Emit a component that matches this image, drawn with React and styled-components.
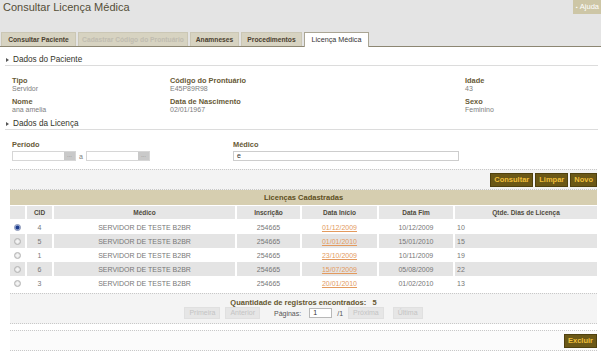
import styled, { createGlobalStyle } from 'styled-components';

const GlobalStyle = createGlobalStyle`
	body {
		margin: 0;
		background: #fff;
		font-family: "Liberation Sans", Arial, sans-serif;
	}
`;

const Page = styled.div`
	width: 601px;
	height: 352px;
	overflow: hidden;
	background: #fff;
`;

const Header = styled.div`
	background: #e4e4e4;
	display: flex;
	flex-direction: column;
`;

const TitleRow = styled.div`
	height: 32px;
	display: flex;
	justify-content: space-between;
	align-items: flex-start;
`;

const Title = styled.h1`
	margin: 0;
	padding: 1px 0 0 3px;
	font-size: 11px;
	line-height: 13px;
	font-weight: normal;
	color: #544e38;
`;

const HelpButton = styled.div`
	height: 14px;
	line-height: 14px;
	padding: 0 2px 0 3px;
	background: #cdc6a6;
	color: #fff;
	font-size: 7.5px;
	white-space: nowrap;
	span {
		font-size: 5px;
		margin-right: 2px;
	}
`;

const TabBar = styled.div`
	height: 14px;
	display: flex;
	align-items: flex-end;
	gap: 2px;
	padding-left: 1px;
	border-bottom: 1px solid #8c8672;
`;

const Tab = styled.div`
	width: ${props => props.$w}px;
	height: ${props => (props.$active ? '15px' : '14px')};
	margin-bottom: ${props => (props.$active ? '-1px' : '0')};
	box-sizing: border-box;
	background: ${props => (props.$active ? '#fff' : '#d7d3c1')};
	border: 1px solid ${props => (props.$active ? '#aaa594' : '#cbc7b5')};
	border-bottom: none;
	text-align: center;
	font-size: ${props => (props.$active ? '7.2px' : '6.7px')};
	font-weight: ${props => (props.$active ? 'normal' : 'bold')};
	line-height: 13px;
	white-space: nowrap;
	color: ${props =>
		props.$disabled ? '#c0bcb0' : props.$active ? '#333' : '#4a4030'};
`;

const Content = styled.div`
	padding: 0 3px 0 5px;
`;

const SectionTitle = styled.div`
	margin-top: ${props => props.$mt}px;
	height: 11px;
	display: flex;
	align-items: center;
	font-size: 8.2px;
	color: #34342a;
	border-bottom: 1px solid #dcdcdc;
	&::before {
		content: '';
		margin: 0 4px 0 1px;
		border-left: 3px solid #555;
		border-top: 2.5px solid transparent;
		border-bottom: 2.5px solid transparent;
	}
`;

const InfoGrid = styled.div`
	display: grid;
	grid-template-columns: 158px 295px 1fr;
	row-gap: 5px;
	padding-left: 7px;
	margin-top: 11px;
`;

const Label = styled.div`
	font-size: 7.4px;
	line-height: 8px;
	font-weight: bold;
	color: #675a36;
	white-space: nowrap;
`;

const Value = styled.div`
	font-size: 7px;
	line-height: 8px;
	color: #7e7e7e;
`;

const FormRow = styled.div`
	display: flex;
	padding-left: 7px;
	margin-top: 11px;
`;

const FormField = styled.div`
	width: ${props => props.$w}px;
`;

const InputLine = styled.div`
	margin-top: 2px;
	display: flex;
	align-items: center;
`;

const DateInput = styled.div`
	width: 64px;
	height: 10px;
	box-sizing: border-box;
	border: 1px solid #d6d6d6;
	display: flex;
	justify-content: flex-end;
	background: #fff;
`;

const CalendarButton = styled.div`
	width: 11px;
	height: 100%;
	background: #c9c9c9;
	color: #8a8a8a;
	font-size: 6px;
	line-height: 6px;
	text-align: center;
	overflow: hidden;
`;

const Separator = styled.span`
	font-size: 7px;
	color: #7e7e7e;
	margin: 0 3px 0 3px;
`;

const TextInput = styled.div`
	width: ${props => props.$w}px;
	height: 10px;
	box-sizing: border-box;
	border: 1px solid #cdcdcd;
	padding-left: 3px;
	font-size: 7px;
	line-height: 8px;
	color: #333;
	background: #fff;
`;

const TableArea = styled.div`
	margin: 8px 1px 0 5px;
`;

const Toolbar = styled.div`
	height: 19px;
	display: flex;
	justify-content: flex-end;
	align-items: center;
	gap: 2px;
	background: ${props => props.$bg || '#f3f3f3'};
	border-top: 1px dotted #c8c8c8;
	border-bottom: 1px dotted #c8c8c8;
	margin-top: ${props => props.$mt || 0}px;
`;

const ActionButton = styled.button`
	height: 14px;
	padding: 0 3px;
	margin: 0;
	background: #6b5817;
	border: 1px solid #4f410f;
	color: #efbf3a;
	font-family: inherit;
	font-size: 7.5px;
	font-weight: bold;
	line-height: 12px;
`;

const Caption = styled.div`
	height: 15px;
	line-height: 15px;
	background: #d6ceb0;
	color: #5e4e22;
	font-size: 7.5px;
	font-weight: bold;
	text-align: center;
`;

const Row = styled.div`
	display: grid;
	grid-template-columns: 15px 25px 181px 63px 75px 74px 1fr;
	column-gap: 2px;
	height: ${props => (props.$head ? 13 : 14)}px;
	margin-top: ${props => (props.$head ? 1 : 0)}px;
	margin-bottom: ${props => (props.$head ? 1 : 0)}px;
`;

const Cell = styled.div`
	display: flex;
	align-items: center;
	justify-content: ${props => (props.$left ? 'flex-start' : 'center')};
	padding-left: ${props => (props.$left ? 2 : 0)}px;
	background: ${props => (props.$shade ? '#e4e4e4' : 'transparent')};
	font-size: 7px;
	color: #777;
	white-space: nowrap;
`;

const HeadCell = styled(Cell)`
	background: #e6e6e6;
	font-size: 6.5px;
	font-weight: bold;
	color: #4f4a3c;
`;

const DateLink = styled.a`
	color: #e39a5e;
	text-decoration: underline;
`;

const Radio = styled.span`
	width: 7px;
	height: 7px;
	box-sizing: border-box;
	border-radius: 50%;
	border: 1px solid ${props => (props.$checked ? '#7d8bb0' : '#b4b4b4')};
	background: ${props =>
		props.$checked
			? 'radial-gradient(circle, #1d3c8c 0 1.5px, #8ea3d2 2.2px, #e6ecf8 3px)'
			: 'radial-gradient(circle, #f4f4f4 0 1px, #d4d4d4 3px)'};
`;

const Pager = styled.div`
	margin-top: 3px;
	padding: 4px 0;
	background: #f4f4f4;
	border-top: 1px dotted #c8c8c8;
	border-bottom: 1px dotted #c8c8c8;
`;

const Count = styled.div`
	height: 9px;
	line-height: 9px;
	text-align: center;
	font-size: 7.5px;
	font-weight: bold;
	color: #655730;
	white-space: pre;
`;

const PagerLine = styled.div`
	height: 12px;
	display: flex;
	justify-content: center;
	align-items: center;
	gap: 5px;
	font-size: 7px;
	color: #555;
`;

const PagerButton = styled.button`
	height: 12px;
	padding: 0 4px;
	margin: 0 ${props => props.$mr || 0}px 0 0;
	background: #e6e6e6;
	border: 1px solid #e0e0e0;
	color: #c4c4c4;
	font-family: inherit;
	font-size: 7px;
	line-height: 10px;
`;

const PageInput = styled.div`
	width: 23px;
	height: 10px;
	box-sizing: border-box;
	margin-left: 3px;
	border: 1px solid #b8b8b8;
	background: #fff;
	padding-left: 3px;
	font-size: 7px;
	line-height: 8px;
	color: #333;
`;

const licencas = [
	{ cid: 4, inicio: '01/12/2009', fim: '10/12/2009', dias: 10, checked: true },
	{ cid: 5, inicio: '01/01/2010', fim: '15/01/2010', dias: 15 },
	{ cid: 1, inicio: '23/10/2009', fim: '10/11/2009', dias: 19 },
	{ cid: 6, inicio: '15/07/2009', fim: '05/08/2009', dias: 22 },
	{ cid: 3, inicio: '20/01/2010', fim: '01/02/2010', dias: 13 }
];

const tabs = [
	{ name: 'Consultar Paciente', w: 75 },
	{ name: 'Cadastrar Código do Prontuário', w: 110, disabled: true },
	{ name: 'Anamneses', w: 49 },
	{ name: 'Procedimentos', w: 61 },
	{ name: 'Licença Médica', w: 65, active: true }
];

function App() {
	return (
		<Page>
			<GlobalStyle />
			<Header>
				<TitleRow>
					<Title>Consultar Licença Médica</Title>
					<HelpButton>
						<span>▪</span>Ajuda
					</HelpButton>
				</TitleRow>
				<TabBar>
					{tabs.map(tab => (
						<Tab
							key={tab.name}
							$w={tab.w}
							$active={tab.active}
							$disabled={tab.disabled}
						>
							{tab.name}
						</Tab>
					))}
				</TabBar>
			</Header>
			<Content>
				<SectionTitle $mt={7}>Dados do Paciente</SectionTitle>
				<InfoGrid>
					<div>
						<Label>Tipo</Label>
						<Value>Servidor</Value>
					</div>
					<div>
						<Label>Código do Prontuário</Label>
						<Value>E45P89R98</Value>
					</div>
					<div>
						<Label>Idade</Label>
						<Value>43</Value>
					</div>
					<div>
						<Label>Nome</Label>
						<Value>ana amelia</Value>
					</div>
					<div>
						<Label>Data de Nascimento</Label>
						<Value>02/01/1967</Value>
					</div>
					<div>
						<Label>Sexo</Label>
						<Value>Feminino</Value>
					</div>
				</InfoGrid>
				<SectionTitle $mt={4}>Dados da Licença</SectionTitle>
				<FormRow>
					<FormField $w={221}>
						<Label>Período</Label>
						<InputLine>
							<DateInput>
								<CalendarButton>...</CalendarButton>
							</DateInput>
							<Separator>a</Separator>
							<DateInput>
								<CalendarButton>...</CalendarButton>
							</DateInput>
						</InputLine>
					</FormField>
					<FormField $w={226}>
						<Label>Médico</Label>
						<InputLine>
							<TextInput $w={226}>e</TextInput>
						</InputLine>
					</FormField>
				</FormRow>
				<TableArea>
					<Toolbar>
						<ActionButton>Consultar</ActionButton>
						<ActionButton>Limpar</ActionButton>
						<ActionButton>Novo</ActionButton>
					</Toolbar>
					<Caption>Licenças Cadastradas</Caption>
					<Row $head>
						<HeadCell />
						<HeadCell>CID</HeadCell>
						<HeadCell>Médico</HeadCell>
						<HeadCell>Inscrição</HeadCell>
						<HeadCell>Data Início</HeadCell>
						<HeadCell>Data Fim</HeadCell>
						<HeadCell>Qtde. Dias de Licença</HeadCell>
					</Row>
					{licencas.map((item, index) => {
						const shade = index % 2 === 1;
						return (
							<Row key={item.cid}>
								<Cell $shade={shade}>
									<Radio $checked={item.checked} />
								</Cell>
								<Cell $shade={shade}>{item.cid}</Cell>
								<Cell $shade={shade}>SERVIDOR DE TESTE B2BR</Cell>
								<Cell $shade={shade}>254665</Cell>
								<Cell $shade={shade}>
									<DateLink>{item.inicio}</DateLink>
								</Cell>
								<Cell $shade={shade}>{item.fim}</Cell>
								<Cell $shade={shade} $left>
									{item.dias}
								</Cell>
							</Row>
						);
					})}
					<Pager>
						<Count>Quantidade de registros encontrados:   5</Count>
						<PagerLine>
							<PagerButton>Primeira</PagerButton>
							<PagerButton $mr={9}>Anterior</PagerButton>
							<span>Páginas:</span>
							<PageInput>1</PageInput>
							<span>/1</span>
							<PagerButton $mr={4}>Próxima</PagerButton>
							<PagerButton>Última</PagerButton>
						</PagerLine>
					</Pager>
					<Toolbar $mt={6} $bg="#fbfbfb">
						<ActionButton>Excluir</ActionButton>
					</Toolbar>
				</TableArea>
			</Content>
		</Page>
	);
}

export default App;
